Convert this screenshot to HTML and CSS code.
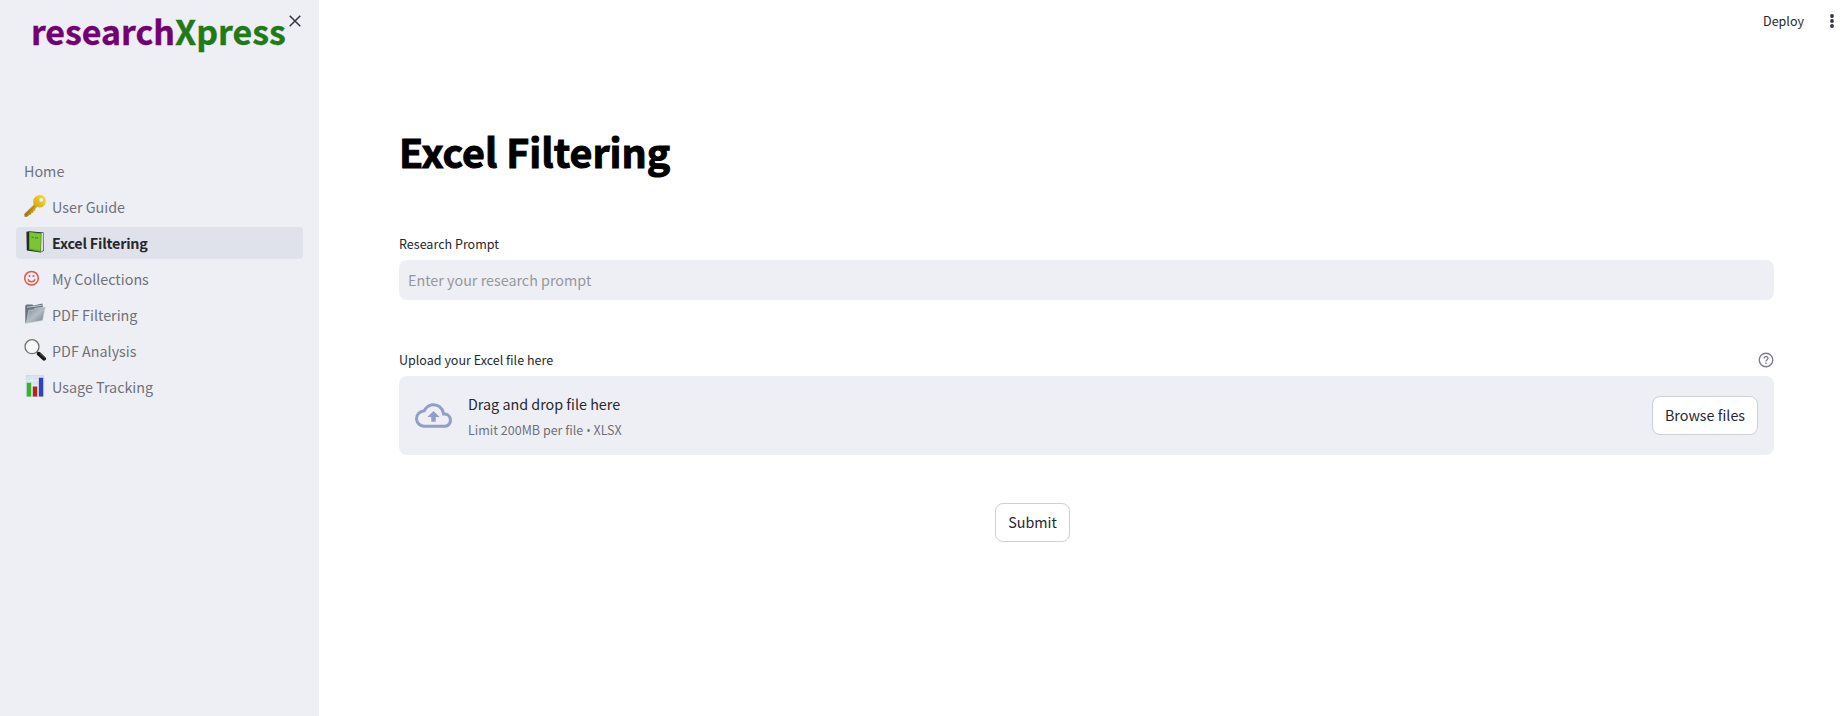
FILE: index.html
```html
<!DOCTYPE html>
<html lang="en">
<head>
<meta charset="utf-8">
<title>researchXpress</title>
<link rel="stylesheet" href="styles.css">
</head>
<body>
<div class="app">
  <aside class="sidebar">
    <div class="brand"><span class="brand-a">research</span><span class="brand-b">Xpress</span></div>
    <svg class="close" viewBox="0 0 12 12" width="12" height="12"><path d="M.7.7l10.600 10.600M11.300.7L.7 11.300" stroke="#31333f" stroke-width="1.500" fill="none"/></svg>
    <nav class="nav">
      <a class="item"><span>Home</span></a>
      <a class="item">
        <svg class="icon" viewBox="0 0 22 22"><defs><linearGradient id="gold" x1="1" y1="0" x2="0" y2="1"><stop offset="0" stop-color="#f3e438"/><stop offset=".45" stop-color="#dcae1c"/><stop offset="1" stop-color="#9c7412"/></linearGradient></defs><path fill="url(#gold)" fill-rule="evenodd" d="M11.500 1.800c3-2.700 7.700-2 9.500.7 1.800 3 .7 7.700-2.400 9.300-1.600.8-3.700.8-5.400 0l-2 2.200.2 1.500-1.900.2-.2 2-2 .1-.1 1.700-1.900.2-1.600 1.900-3 .3-.5-3L9.800 9.500C8.700 6.700 9.200 3.800 11.500 1.800zM17.200 3a1.900 1.900 0 1 0 .1 3.800A1.900 1.900 0 0 0 17.200 3z"/><path d="M2 19.800L10.800 10.800" stroke="#8a6a18" stroke-width=".7"/></svg>
        <span>User Guide</span></a>
      <a class="item active">
        <svg class="icon" viewBox="0 0 22 22"><path fill="#202d20" d="M2.400.8l2.700-.6 14.600 1.300.2 18.200-3.300 1.700-13.800-2z"/><path fill="#d8dccb" d="M17 2.200l2.400-.4v17.500L16.800 21z"/><path fill="#5c9f25" d="M5 .7l12.700 1.500-.9 18.900L5 18.700z"/><path fill="#7bc437" d="M5.800 1.500l11 1.300-.8 17L5.800 17.600z"/><path d="M7.500 6.200l2.500.3M11 6.700l3 .5" stroke="#4f8d22" stroke-width="1.200"/></svg>
        <span>Excel Filtering</span></a>
      <a class="item">
        <svg class="icon" viewBox="0 0 22 22"><g fill="none" stroke="#ee5148" stroke-width="1.500"><circle cx="7.500" cy="11.200" r="6.800"/><path d="M4 12.300c1 3.300 6 3.300 7 0" stroke-width="1.400"/></g><circle cx="5.500" cy="9" r="1.100" fill="#ee5148"/><circle cx="9.500" cy="9" r="1.100" fill="#ee5148"/></svg>
        <span>My Collections</span></a>
      <a class="item">
        <svg class="icon" viewBox="0 0 22 22"><defs><linearGradient id="steel" x1="0" y1="0" x2="1" y2="1"><stop offset="0" stop-color="#7d8791"/><stop offset=".5" stop-color="#b4bdc5"/><stop offset="1" stop-color="#6c7782"/></linearGradient></defs><path fill="#687581" d="M1.200 3l1.200-1.500h6l1.100 1L18.300.5l.8 4.500L6 10 2.300 20.500l-1-.6z"/><path d="M3 4.300l14.800-2" stroke="#cbd2d7" stroke-width=".9"/><path fill="url(#steel)" stroke="#dde1e5" stroke-width=".5" d="M4.800 7.300l4.700-.5 1.300-1.500 10.700-1.500-2.900 13.700-16.400 3z"/></svg>
        <span>PDF Filtering</span></a>
      <a class="item">
        <svg class="icon" viewBox="0 0 22 22"><path d="M12.500 12.500l3 3" stroke="#777" stroke-width="2"/><path d="M14.800 14.800l5.200 4.800" stroke="#161616" stroke-width="4" stroke-linecap="round"/><path d="M15.800 14.300l4.800 4.500" stroke="#777" stroke-width=".8"/><circle cx="8" cy="7.700" r="7" fill="#f7f8f9" stroke="#6f7378" stroke-width="1.300"/></svg>
        <span>PDF Analysis</span></a>
      <a class="item">
        <svg class="icon" viewBox="0 0 22 22"><path fill="#d8e2ed" stroke="#c0cbdb" stroke-width=".5" d="M2.200.3h17.600v21.200H2.200z"/><path d="M2.500 5.500h17M2.500 10.500h17M8 .5v21M14.500.5v21" stroke="#eef3f8" stroke-width=".7"/><path fill="#35b526" d="M2.800 7.800h4.400v13.700H2.800z"/><path fill="#b3261b" d="M8.800 11.500h4.400v10H8.800z"/><path fill="#3244b4" d="M14.800 2.700h4.400v18.800h-4.400z"/></svg>
        <span>Usage Tracking</span></a>
    </nav>
  </aside>
  <main class="main">
    <header class="toolbar">
      <span class="deploy">Deploy</span>
      <svg class="dots" width="4" height="14" viewBox="0 0 4 14" fill="#31333f"><circle cx="2" cy="2" r="1.900"/><circle cx="2" cy="7" r="1.900"/><circle cx="2" cy="12" r="1.900"/></svg>
    </header>
    <section class="content">
      <h1 class="title">Excel Filtering</h1>
      <label class="label">Research Prompt</label>
      <div class="input"><span>Enter your research prompt</span></div>
      <div class="label-row"><span class="label label-up">Upload your Excel file here</span>
        <svg class="help" width="16" height="16" viewBox="0 0 16 16" fill="none" stroke="#7d7e87" stroke-width="1.400"><circle cx="8" cy="8" r="6.800"/><path d="M6 6.500C6 3.900 10 3.900 10 6.300 10 7.700 8 7.700 8 9.500" stroke-width="1.300"/><path d="M8 10.500v1.400"/></svg>
      </div>
      <div class="dropzone">
        <svg class="cloud" width="37" height="37" viewBox="0 0 24 24" fill="#939ec7"><path d="M19.350 10.040A7.490 7.490 0 0 0 12 4C9.110 4 6.600 5.640 5.350 8.040A5.994 5.994 0 0 0 0 14c0 3.310 2.690 6 6 6h13c2.760 0 5-2.240 5-5 0-2.640-2.050-4.780-4.650-4.960zM19 18H6c-2.210 0-4-1.790-4-4 0-2.050 1.530-3.760 3.560-3.970l1.070-.11.5-.95A5.469 5.469 0 0 1 12 6c2.620 0 4.880 1.860 5.390 4.430l.3 1.500 1.530.11A2.980 2.980 0 0 1 22 15c0 1.650-1.350 3-3 3zM8 13h2.550v3h2.900v-3H16l-4-4z"/></svg>
        <div class="drop-text"><span class="drop-a">Drag and drop file here</span><span class="drop-b">Limit 200MB per file <span class="bullet">•</span> XLSX</span></div>
        <button class="btn browse">Browse files</button>
      </div>
      <button class="btn submit">Submit</button>
    </section>
  </main>
</div>
</body>
</html>
```
FILE: styles.css
```css
* { box-sizing: border-box; }
body {
  margin: 0;
  background: #fff;
  color: #262730;
  font-family: "Noto Sans CJK SC", "Open Sans", sans-serif;
  font-size: 14.330px;
  white-space: nowrap;
}
.app { display: flex; height: 716px; overflow: hidden; }
.sidebar { position: relative; width: 319px; flex: none; background: #eeeff5; }
.brand {
  padding: 10px 0 0 31px;
  height: 155px;
  font-size: 33.900px;
  font-weight: 700;
  line-height: 42px;
  -webkit-text-stroke: .4px currentColor;
}
.brand-a { color: #730073; -webkit-text-stroke-color: #730073; }
.brand-b { color: #227918; -webkit-text-stroke-color: #227918; }
.close { position: absolute; left: 289px; top: 15px; }
.nav { display: flex; flex-direction: column; gap: 4px; padding: 0 16px; }
.item {
  display: flex;
  align-items: center;
  gap: 6px;
  height: 32px;
  padding: 0 8px;
  border-radius: 4px;
  color: #707178;
  line-height: 32px;
}
.active { background: #e0e2eb; color: #262730; font-weight: 700; letter-spacing: -.2px; }
.icon { width: 22px; height: 22px; flex: none; margin-top: -2px; }
.main { flex: 1; min-width: 0; }
.toolbar {
  display: flex;
  justify-content: flex-end;
  align-items: center;
  gap: 26px;
  height: 42px;
  padding-right: 10px;
}
.deploy, .label { font-size: 12.540px; line-height: 20px; }
.content { display: flex; flex-direction: column; padding: 0 70px 0 80px; }
.title {
  margin: 82px 0 89px;
  height: 53px;
  color: #000;
  font-size: 39.400px;
  font-weight: 700;
  line-height: 53px;
  -webkit-text-stroke: 1px #000;
}
.label { height: 20px; margin-top: -32px; }
.input {
  height: 40px;
  margin-top: 6px;
  padding-left: 9px;
  border-radius: 8px;
  background: #eeeff5;
  color: #96979d;
  line-height: 40px;
}
.label-row { display: flex; justify-content: space-between; align-items: center; height: 20px; margin: 50px 0 6px; }
.label-up { margin-top: 0; }
.dropzone {
  display: flex;
  align-items: center;
  height: 79px;
  padding: 0 16px;
  border-radius: 8px;
  background: #eeeff5;
}
.cloud { margin-right: 16px; margin-top: -1px; }
.drop-text { display: flex; flex: 1; flex-direction: column; align-items: flex-start; }
.drop-a { line-height: 26px; }
.drop-b { height: 24px; color: #707178; font-size: 12.540px; line-height: 26px; }
.bullet { font-family: "Open Sans", sans-serif; font-size: 12px; line-height: 1; }
.btn {
  height: 39px;
  padding: 0 0 2px;
  border: 1px solid #cfd0d5;
  border-radius: 8px;
  background: #fff;
  color: #262730;
  font: inherit;
  line-height: 35px;
}
.browse { width: 106px; }
.submit { width: 75px; margin: 48px 0 0 596px; }
```
